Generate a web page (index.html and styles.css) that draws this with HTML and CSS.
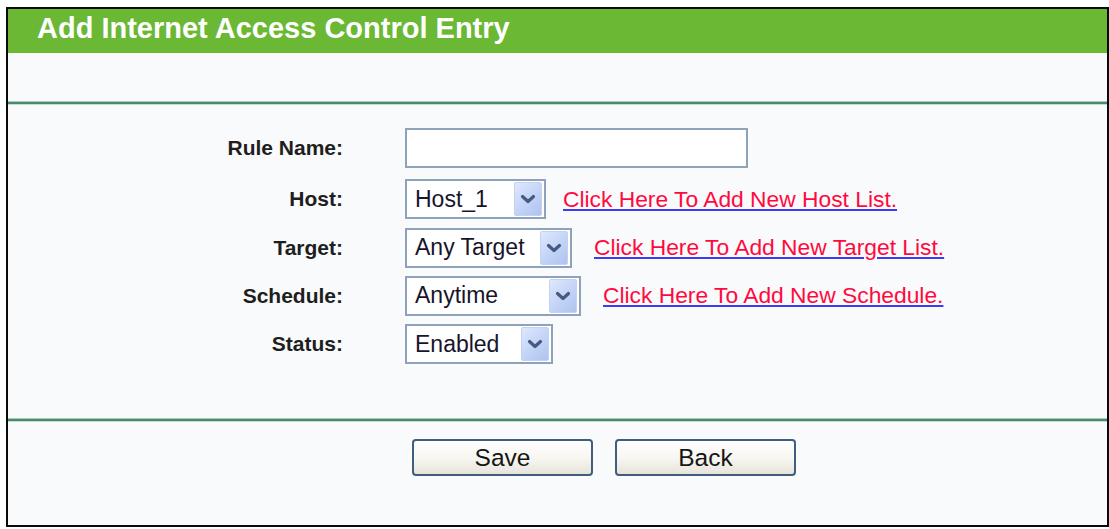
FILE: index.html
```html
<!DOCTYPE html>
<html lang="en">
<head>
<meta charset="utf-8">
<title>Add Internet Access Control Entry</title>
<link rel="stylesheet" href="styles.css">
</head>
<body>
<div class="frame">
  <div class="header">Add Internet Access Control Entry</div>
  <div class="blank"></div>
  <div class="sep"></div>
  <div class="form">
    <div class="row">
      <div class="label">Rule Name:</div>
      <div class="input"></div>
    </div>
    <div class="row row-host">
      <div class="label">Host:</div>
      <div class="select sel-host"><span class="val">Host_1</span><span class="arrow"><svg width="16" height="10" viewBox="0 0 16 10"><path d="M2.5 2.5 L8 7.5 L13.5 2.5" fill="none" stroke="#485a82" stroke-width="3.2" stroke-linecap="round" stroke-linejoin="round"/></svg></span></div>
      <a class="link link-host" href="#">Click Here To Add New Host List.</a>
    </div>
    <div class="row">
      <div class="label">Target:</div>
      <div class="select sel-target"><span class="val">Any Target</span><span class="arrow"><svg width="16" height="10" viewBox="0 0 16 10"><path d="M2.5 2.5 L8 7.5 L13.5 2.5" fill="none" stroke="#485a82" stroke-width="3.2" stroke-linecap="round" stroke-linejoin="round"/></svg></span></div>
      <a class="link" href="#">Click Here To Add New Target List.</a>
    </div>
    <div class="row">
      <div class="label">Schedule:</div>
      <div class="select sel-schedule"><span class="val">Anytime</span><span class="arrow"><svg width="16" height="10" viewBox="0 0 16 10"><path d="M2.5 2.5 L8 7.5 L13.5 2.5" fill="none" stroke="#485a82" stroke-width="3.2" stroke-linecap="round" stroke-linejoin="round"/></svg></span></div>
      <a class="link" href="#">Click Here To Add New Schedule.</a>
    </div>
    <div class="row">
      <div class="label">Status:</div>
      <div class="select sel-status"><span class="val">Enabled</span><span class="arrow"><svg width="16" height="10" viewBox="0 0 16 10"><path d="M2.5 2.5 L8 7.5 L13.5 2.5" fill="none" stroke="#485a82" stroke-width="3.2" stroke-linecap="round" stroke-linejoin="round"/></svg></span></div>
    </div>
  </div>
  <div class="sep"></div>
  <div class="actions">
    <button class="btn" type="button">Save</button>
    <button class="btn" type="button">Back</button>
  </div>
</div>
</body>
</html>
```

FILE: styles.css
```css
html, body {
  margin: 0;
  padding: 0;
  background: #ffffff;
}

body {
  font-family: "Liberation Sans", Arial, sans-serif;
  color: #1c1c1c;
}

.frame {
  margin: 7px 0 0 6px;
  width: 1103px;
  height: 520px;
  box-sizing: border-box;
  border: 2px solid #0a0a0a;
  background: #f9fafb;
  display: flex;
  flex-direction: column;
}

.header {
  height: 44px;
  box-sizing: border-box;
  background: #6ab833;
  color: #ffffff;
  font-weight: bold;
  font-size: 29px;
  line-height: 38px;
  padding: 0 0 6px 29px;
  white-space: nowrap;
}

.blank {
  height: 49px;
}

.sep {
  height: 2px;
  background: #4a8a6a;
  box-shadow: 0 1px 0 #c3ddd0, 0 -1px 0 #a9cdb9;
}

.form {
  height: 315px;
  box-sizing: border-box;
  padding-top: 24px;
  display: flex;
  flex-direction: column;
  gap: 8.33px;
}

.row {
  display: flex;
  align-items: center;
  height: 40px;
}

.row-host {
  margin-top: 3px;
}

.label {
  width: 335px;
  margin-right: 62px;
  text-align: right;
  font-weight: bold;
  font-size: 21px;
  color: #1e1e1e;
  white-space: nowrap;
}

.input {
  width: 343px;
  height: 40px;
  box-sizing: border-box;
  border: 2px solid #8ea2b9;
  background: #ffffff;
}

.select {
  height: 40px;
  box-sizing: border-box;
  border: 2px solid #8ea2b9;
  background: #ffffff;
  display: flex;
  align-items: center;
  justify-content: space-between;
  padding: 1px 2px 1px 8px;
}

.sel-host { width: 141px; }
.sel-target { width: 167px; }
.sel-schedule { width: 176px; }
.sel-status { width: 148px; }

.val {
  font-size: 23px;
  color: #18142a;
  white-space: nowrap;
}

.arrow {
  width: 28px;
  height: 34px;
  box-sizing: border-box;
  border: 1px solid #c2d1f4;
  border-radius: 2px;
  background: linear-gradient(135deg, #dfe8fd 0%, #c5d5f7 50%, #adc3f0 100%);
  display: flex;
  align-items: center;
  justify-content: center;
  flex-shrink: 0;
}

.arrow svg {
  display: block;
}

.link {
  margin-left: 22px;
  font-size: 22.8px;
  color: #ff0a40;
  text-decoration: underline;
  text-decoration-color: #3c3cf2;
  text-decoration-thickness: 2px;
  text-underline-offset: 2px;
  white-space: nowrap;
}

.link-host {
  margin-left: 17px;
}

.actions {
  flex: 1;
  display: flex;
  align-items: flex-start;
  gap: 22px;
  padding: 18px 0 0 404px;
}

.btn {
  width: 181px;
  height: 37px;
  box-sizing: border-box;
  border: 2px solid #3f5d7f;
  border-radius: 4px;
  background: linear-gradient(#ffffff 0%, #f6f5f0 55%, #e6e4da 100%);
  font-family: "Liberation Sans", Arial, sans-serif;
  font-size: 24.5px;
  color: #161616;
  padding: 0;
  line-height: 33px;
}
```
